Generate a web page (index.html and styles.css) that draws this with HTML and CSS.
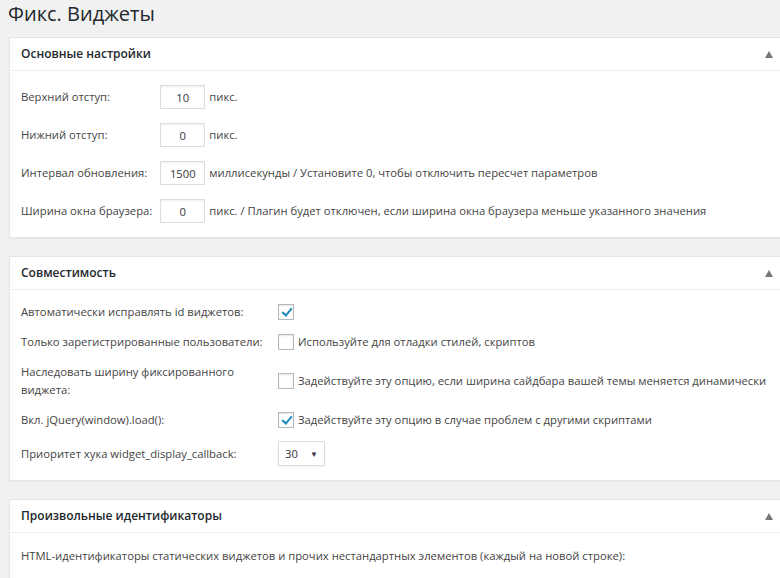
FILE: index.html
```html
<!DOCTYPE html>
<html lang="ru">
<head>
    <meta charset="UTF-8">
    <meta name="viewport" content="width=device-width, initial-scale=1.0">
    <title>Фикс. Виджеты</title>
    <link rel="stylesheet" href="styles.css">
</head>
<body>
    <div class="wrap">
        <h1>Фикс. Виджеты</h1>

        <div class="postbox">
            <div class="hndle">
                <span>Основные настройки</span>
                <svg class="toggle" width="8" height="7" viewBox="0 0 8 7"><polygon points="4,0 8,7 0,7" fill="#72777c"/></svg>
            </div>
            <div class="inside">
                <table class="opts">
                    <tr>
                        <td class="label">Верхний отступ:</td>
                        <td><input type="text" class="num" value="10"></td>
                        <td class="hint">пикс.</td>
                    </tr>
                    <tr>
                        <td class="label">Нижний отступ:</td>
                        <td><input type="text" class="num" value="0"></td>
                        <td class="hint">пикс.</td>
                    </tr>
                    <tr>
                        <td class="label">Интервал обновления:</td>
                        <td><input type="text" class="num" value="1500"></td>
                        <td class="hint">миллисекунды / Установите 0, чтобы отключить пересчет параметров</td>
                    </tr>
                    <tr>
                        <td class="label">Ширина окна браузера:</td>
                        <td><input type="text" class="num" value="0"></td>
                        <td class="hint">пикс. / Плагин будет отключен, если ширина окна браузера меньше указанного значения</td>
                    </tr>
                </table>
            </div>
        </div>

        <div class="postbox">
            <div class="hndle">
                <span>Совместимость</span>
                <svg class="toggle" width="8" height="7" viewBox="0 0 8 7"><polygon points="4,0 8,7 0,7" fill="#72777c"/></svg>
            </div>
            <div class="inside compat">
                <div class="row">
                    <div class="label">Автоматически исправлять id виджетов:</div>
                    <label class="check"><span class="box checked"></span></label>
                </div>
                <div class="row">
                    <div class="label">Только зарегистрированные пользователи:</div>
                    <label class="check"><span class="box"></span>Используйте для отладки стилей, скриптов</label>
                </div>
                <div class="row">
                    <div class="label">Наследовать ширину фиксированного виджета:</div>
                    <label class="check"><span class="box"></span>Задействуйте эту опцию, если ширина сайдбара вашей темы меняется динамически</label>
                </div>
                <div class="row">
                    <div class="label">Вкл. jQuery(window).load():</div>
                    <label class="check"><span class="box checked"></span>Задействуйте эту опцию в случае проблем с другими скриптами</label>
                </div>
                <div class="row">
                    <div class="label">Приоритет хука widget_display_callback:</div>
                    <div><span class="select">30<span class="caret">&#9660;</span></span></div>
                </div>
            </div>
        </div>

        <div class="postbox">
            <div class="hndle">
                <span>Произвольные идентификаторы</span>
                <svg class="toggle" width="8" height="7" viewBox="0 0 8 7"><polygon points="4,0 8,7 0,7" fill="#72777c"/></svg>
            </div>
            <div class="inside">
                <p class="note">HTML-идентификаторы статических виджетов и прочих нестандартных элементов (каждый на новой строке):</p>
            </div>
        </div>
    </div>
</body>
</html>
```

FILE: styles.css
```css
body {
    margin: 0;
    background: #f1f1f1;
    color: #444;
    font-family: "Open Sans", "Noto Sans", sans-serif;
    font-size: 11.25px;
    line-height: 18px;
    overflow: hidden;
}
.wrap {
    width: 782px;
    margin-left: 9px;
}
h1 {
    margin: 0;
    padding: 0;
    margin-left: -1px;
    font-size: 20px;
    font-weight: 400;
    line-height: 28px;
    color: #23282d;
    height: 37px;
}
.postbox {
    background: #fff;
    border: 1px solid #e5e5e5;
    box-shadow: 0 1px 1px rgba(0, 0, 0, 0.04);
    margin-bottom: 18px;
}
.hndle {
    display: flex;
    justify-content: space-between;
    align-items: center;
    height: 32px;
    padding: 0 17px 0 11px;
    border-bottom: 1px solid #eee;
    font-size: 12px;
    font-weight: 600;
    color: #23282d;
}
.toggle {
    display: block;
}
.inside {
    padding: 7px 11px 7px;
}
.opts {
    border-collapse: collapse;
}
.opts td {
    padding: 7px 0;
    vertical-align: middle;
}
.opts td.label {
    padding-right: 8px;
    white-space: nowrap;
}
.num {
    width: 45px;
    height: 24px;
    box-sizing: border-box;
    border: 1px solid #ddd;
    box-shadow: inset 0 1px 2px rgba(0, 0, 0, 0.07);
    font: inherit;
    color: #32373c;
    text-align: center;
    padding: 0;
    display: block;
}
.hint {
    padding-left: 4px !important;
    white-space: nowrap;
}
.compat {
    padding-bottom: 8px;
}
.row {
    display: grid;
    grid-template-columns: 257px 1fr;
    align-items: center;
    padding: 6px 0;
}
.row .label {
    padding-right: 12px;
}
.check {
    display: flex;
    align-items: center;
    white-space: nowrap;
}
.box {
    width: 16px;
    height: 16px;
    box-sizing: border-box;
    border: 1px solid #b4b9be;
    box-shadow: inset 0 1px 2px rgba(0, 0, 0, 0.1);
    margin-right: 4px;
    position: relative;
    flex: none;
}
.box.checked::after {
    content: "";
    position: absolute;
    left: 5px;
    top: 1px;
    width: 4px;
    height: 8px;
    border: solid #1e8cbe;
    border-width: 0 2px 2px 0;
    transform: rotate(40deg);
}
.select {
    display: inline-flex;
    align-items: center;
    justify-content: space-between;
    width: 47px;
    height: 25px;
    box-sizing: border-box;
    border: 1px solid #ddd;
    box-shadow: 0 1px 2px rgba(0, 0, 0, 0.07);
    padding: 0 6px 0 6px;
    color: #32373c;
    vertical-align: middle;
}
.caret {
    font-size: 8px;
    color: #32373c;
}
.note {
    margin: 0;
    padding: 7px 0 20px;
}
```
